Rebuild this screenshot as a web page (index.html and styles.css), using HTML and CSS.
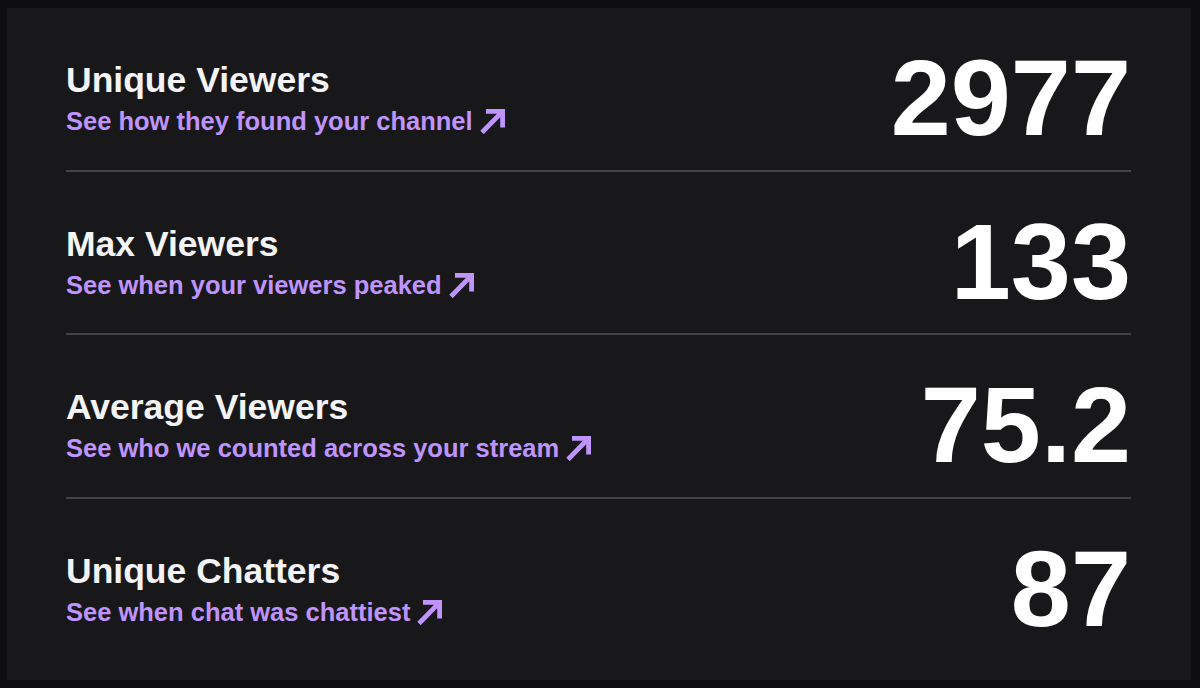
FILE: index.html
```html
<!DOCTYPE html>
<html lang="en">
<head>
<meta charset="utf-8">
<title>Stream Stats</title>
<link rel="stylesheet" href="styles.css">
</head>
<body>
<main class="panel">
  <section class="row">
    <div class="info">
      <div class="title">Unique Viewers</div>
      <a class="link" href="#">See how they found your channel<svg class="arrow" viewBox="0 0 26 26" width="26" height="26"><path d="M6 3.4H22.6V19.5M22.6 3.4L2 24.5"/></svg></a>
    </div>
    <div class="value">2977</div>
  </section>
  <section class="row">
    <div class="info">
      <div class="title">Max Viewers</div>
      <a class="link" href="#">See when your viewers peaked<svg class="arrow" viewBox="0 0 26 26" width="26" height="26"><path d="M6 3.4H22.6V19.5M22.6 3.4L2 24.5"/></svg></a>
    </div>
    <div class="value">133</div>
  </section>
  <section class="row">
    <div class="info">
      <div class="title">Average Viewers</div>
      <a class="link" href="#">See who we counted across your stream<svg class="arrow" viewBox="0 0 26 26" width="26" height="26"><path d="M6 3.4H22.6V19.5M22.6 3.4L2 24.5"/></svg></a>
    </div>
    <div class="value">75.2</div>
  </section>
  <section class="row last">
    <div class="info">
      <div class="title">Unique Chatters</div>
      <a class="link" href="#">See when chat was chattiest<svg class="arrow" viewBox="0 0 26 26" width="26" height="26"><path d="M6 3.4H22.6V19.5M22.6 3.4L2 24.5"/></svg></a>
    </div>
    <div class="value">87</div>
  </section>
</main>
</body>
</html>
```
FILE: styles.css
```css
html, body {
  margin: 0;
  padding: 0;
  background: #0e0e10;
}

body {
  width: 1200px;
  height: 688px;
  overflow: hidden;
  font-family: "Liberation Sans", Arial, sans-serif;
}

.panel {
  box-sizing: border-box;
  margin: 8px 9px 8px 7px;
  height: 672px;
  background: #18181b;
  padding: 0 60px 0 59px;
}

.row {
  display: flex;
  justify-content: space-between;
  align-items: center;
  padding: 36px 0 17.5px;
  border-bottom: 2px solid #444448;
}

.row.last {
  border-bottom: none;
}

.info {
  display: flex;
  flex-direction: column;
  align-items: flex-start;
}

.title {
  font-size: 35.5px;
  line-height: 40px;
  font-weight: 700;
  color: #f4f4f6;
}

.link {
  margin-top: 6px;
  font-size: 25.5px;
  line-height: 30px;
  font-weight: 700;
  color: #bf94ff;
  text-decoration: none;
  white-space: nowrap;
}

.arrow {
  display: inline-block;
  margin-left: 7px;
  vertical-align: -4px;
  fill: none;
  stroke: #bf94ff;
  stroke-width: 4.8;
  stroke-linecap: butt;
  stroke-linejoin: miter;
}

.value {
  font-size: 108px;
  line-height: 108px;
  font-weight: 700;
  color: #ffffff;
}
```
